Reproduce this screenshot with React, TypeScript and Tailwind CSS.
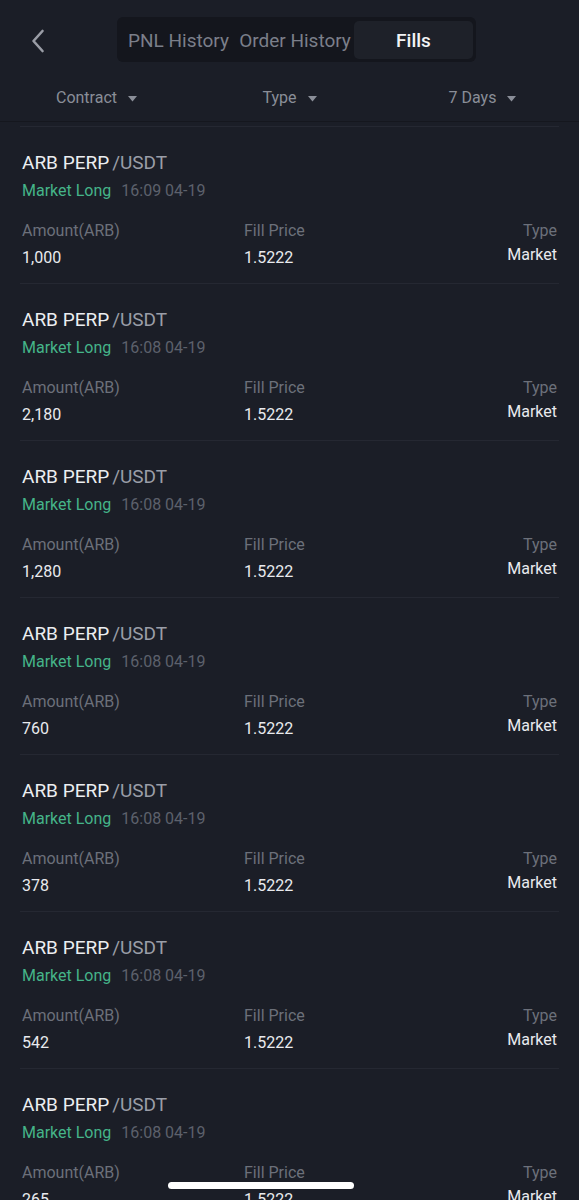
import React from 'react';

const fills = [
  { amount: '1,000', time: '16:09 04-19' },
  { amount: '2,180', time: '16:08 04-19' },
  { amount: '1,280', time: '16:08 04-19' },
  { amount: '760', time: '16:08 04-19' },
  { amount: '378', time: '16:08 04-19' },
  { amount: '542', time: '16:08 04-19' },
  { amount: '265', time: '16:08 04-19' },
];

function Caret() {
  return (
    <svg width="9" height="6" viewBox="0 0 9 6" className="ml-[11px] mt-[1px]">
      <path d="M0 0 H9 L4.5 5.5 Z" fill="#8a8e98" />
    </svg>
  );
}

function FillCard({ amount, time }: { amount: string; time: string }) {
  return (
    <div className="mx-[20px] border-t border-[#252832] px-[2px] pt-[24px] pb-[14px]">
      <div className="text-[19px] leading-[24px] text-[#eceef1]">
        ARB PERP<span className="ml-[3px] text-[#9a9ea8]">/USDT</span>
      </div>
      <div className="mt-[5px] flex text-[16px] leading-[22px]">
        <span className="text-[#45b489]">Market Long</span>
        <span className="ml-[10px] text-[#5d616c]">{time}</span>
      </div>
      <div className="mt-[18px] grid grid-cols-[222px_1fr_auto] text-[16px] leading-[22px]">
        <div>
          <div className="text-[#6c707a]">Amount(ARB)</div>
          <div className="mt-[5px] text-[#e9eaee]">{amount}</div>
        </div>
        <div>
          <div className="text-[#6c707a]">Fill Price</div>
          <div className="mt-[5px] text-[#e9eaee]">1.5222</div>
        </div>
        <div className="text-right">
          <div className="text-[#6c707a]">Type</div>
          <div className="mt-[2px] text-[#e9eaee]">Market</div>
        </div>
      </div>
    </div>
  );
}

export default function App() {
  return (
    <div
      className="relative h-[1200px] w-full overflow-hidden bg-[#1b1e27]"
      style={{ fontFamily: 'Roboto, "Noto Sans", sans-serif' }}
    >
      {/* Header */}
      <div className="flex pt-[17px]">
        <div className="w-[117px] pl-[31px] pt-[12px]">
          <svg width="14" height="24" viewBox="0 0 14 24">
            <polyline points="11.5,2 2.5,12 11.5,22" fill="none" stroke="#9a9da6" strokeWidth="2.6" strokeLinecap="round" strokeLinejoin="round" />
          </svg>
        </div>
        <div className="flex h-[45px] rounded-[6px] bg-[#14161d] pt-[4px] pb-[3px] pl-[4px] pr-[3px] text-[19px] leading-[24px]">
          <div className="flex w-[115px] items-center justify-center pt-[1px] text-[#7b7f8a]">PNL History</div>
          <div className="flex w-[118px] items-center justify-center pt-[1px] text-[#7b7f8a]">Order History</div>
          <div className="flex w-[119px] items-center justify-center rounded-[5px] bg-[#1e2129] pt-[1px] font-medium text-[#f2f3f5]">Fills</div>
        </div>
      </div>

      {/* Filters */}
      <div className="mt-[24px] grid h-[24px] grid-cols-3 text-[16px] leading-[24px] text-[#8a8e98]">
        <div className="flex items-center justify-center">Contract<Caret /></div>
        <div className="flex items-center justify-center">Type<Caret /></div>
        <div className="flex items-center justify-center">7 Days<Caret /></div>
      </div>
      <div className="mt-[11px] h-px bg-[#15171e]" />

      {/* List */}
      <div className="mt-[4px]">
        {fills.map((f, i) => (
          <FillCard key={i} amount={f.amount} time={f.time} />
        ))}
      </div>

      {/* Home indicator */}
      <div className="absolute bottom-[11px] left-[168px] h-[7px] w-[186px] rounded-full bg-white" />
    </div>
  );
}
